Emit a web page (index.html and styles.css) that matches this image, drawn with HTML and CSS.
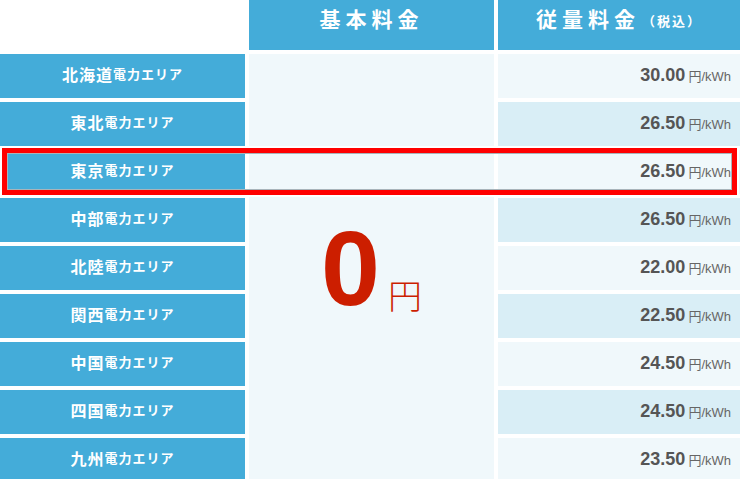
FILE: index.html
```html
<!DOCTYPE html>
<html lang="ja">
<head>
<meta charset="utf-8">
<title>電力料金表</title>
<link rel="stylesheet" href="styles.css">
</head>
<body>
<div class="wrap">
  <div class="grid">
    <div class="corner"></div>
    <div class="head">基本料金</div>
    <div class="head">従量料金<small>（税込）</small></div>

    <div class="base"><span class="zero">0</span><span class="yen">円</span></div>

    <div class="area">北海道<span>電力エリア</span></div>
    <div class="price odd">30.00<span>円/kWh</span></div>
    <div class="area">東北<span>電力エリア</span></div>
    <div class="price even">26.50<span>円/kWh</span></div>
    <div class="area">東京<span>電力エリア</span></div>
    <div class="price odd">26.50<span>円/kWh</span></div>
    <div class="area">中部<span>電力エリア</span></div>
    <div class="price even">26.50<span>円/kWh</span></div>
    <div class="area">北陸<span>電力エリア</span></div>
    <div class="price odd">22.00<span>円/kWh</span></div>
    <div class="area">関西<span>電力エリア</span></div>
    <div class="price even">22.50<span>円/kWh</span></div>
    <div class="area">中国<span>電力エリア</span></div>
    <div class="price odd">24.50<span>円/kWh</span></div>
    <div class="area">四国<span>電力エリア</span></div>
    <div class="price even">24.50<span>円/kWh</span></div>
    <div class="area">九州<span>電力エリア</span></div>
    <div class="price odd">23.50<span>円/kWh</span></div>
  </div>
  <div class="highlight"></div>
</div>
</body>
</html>
```

FILE: styles.css
```css
html, body {
  margin: 0;
  padding: 0;
  overflow: hidden;
  background: #ffffff;
}

body {
  font-family: "Noto Sans CJK JP", "Liberation Sans", sans-serif;
}

.wrap {
  position: relative;
  width: 740px;
}

.grid {
  display: grid;
  grid-template-columns: 245px 245px 242px;
  grid-template-rows: 50px repeat(9, 44px);
  gap: 4px;
}

.corner {
  background: #ffffff;
}

.head {
  background: #44acd9;
  color: #ffffff;
  font-weight: 700;
  font-size: 21px;
  letter-spacing: 5px;
  display: flex;
  align-items: center;
  justify-content: center;
  padding-bottom: 13px;
  line-height: 21px;
}

.head small {
  font-size: 13px;
  letter-spacing: 2px;
  margin-left: 2px;
  font-weight: 700;
  position: relative;
  top: 2px;
}

.area {
  grid-column: 1;
  background: #44acd9;
  color: #ffffff;
  font-weight: 700;
  font-size: 16px;
  letter-spacing: 1px;
  display: flex;
  align-items: center;
  justify-content: center;
  line-height: 20px;
  padding-bottom: 4px;
  box-sizing: border-box;
}

.area span {
  font-size: 13px;
  letter-spacing: 1px;
}

.base {
  grid-column: 2;
  grid-row: 2 / 11;
  background: #f0f8fb;
  display: flex;
  align-items: center;
  justify-content: center;
  color: #cc1e00;
}

.zero {
  font-family: "Liberation Sans", sans-serif;
  font-weight: 700;
  font-size: 106px;
  line-height: 1;
}

.yen {
  font-size: 34px;
  font-weight: 300;
  align-self: center;
  margin-top: 52px;
  margin-left: 8px;
}

.price {
  grid-column: 3;
  display: flex;
  align-items: baseline;
  justify-content: flex-end;
  padding: 11px 9px 0 0;
  box-sizing: border-box;
  font-family: "Liberation Sans", "Noto Sans CJK JP", sans-serif;
  font-weight: 700;
  font-size: 18px;
  color: #555555;
  line-height: 20px;
}

.price span {
  font-size: 13px;
  font-weight: 400;
  color: #666666;
  margin-left: 3px;
}

.odd {
  background: #f0f8fb;
}

.even {
  background: #d9eef6;
}

.highlight {
  position: absolute;
  left: 2px;
  top: 148px;
  width: 735px;
  height: 47px;
  box-sizing: border-box;
  border: 5px solid #ff0000;
  box-shadow: inset 0 0 0 1px #a8b4ba, 0 0 0 2px #ffffff;
  pointer-events: none;
}
```
